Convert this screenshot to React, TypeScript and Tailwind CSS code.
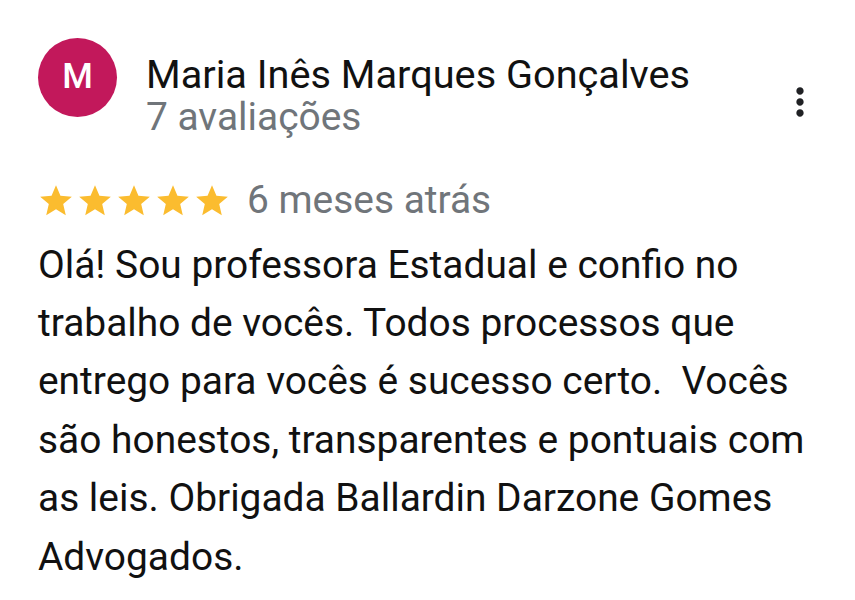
const Star = () => (
  <svg viewBox="0 0 24 24" className="w-[38px] h-[38px]" fill="#fbbc2f">
    <path d="M12 17.27L18.18 21l-1.64-7.03L22 9.24l-7.19-.61L12 2 9.19 8.63 2 9.24l5.46 4.73L5.82 21z" />
  </svg>
);

export default function App() {
  return (
    <div className="w-[855px] h-[600px] bg-white font-['Roboto',sans-serif] pl-[38px] pr-[20px] pt-[38px]">
      {/* Header */}
      <div className="flex items-start">
        <div className="w-[79px] h-[79px] rounded-full bg-[#c2185b] flex items-center justify-center text-white text-[35px] font-medium shrink-0">
          M
        </div>
        <div className="ml-[29px] flex-1 pt-[15.5px]">
          <div className="text-[39.7px] leading-[42px] text-[#111111]">Maria Inês Marques Gonçalves</div>
          <div className="text-[38.9px] leading-[42px] text-[#70757a]">7 avaliações</div>
        </div>
        <svg viewBox="0 0 24 24" className="w-[44px] h-[44px] mt-[41.5px] mr-[13px]" fill="#202124">
          <path d="M12 8c1.1 0 2-.9 2-2s-.9-2-2-2-2 .9-2 2 .9 2 2 2zm0 2c-1.1 0-2 .9-2 2s.9 2 2 2 2-.9 2-2-.9-2-2-2zm0 6c-1.1 0-2 .9-2 2s.9 2 2 2 2-.9 2-2-.9-2-2-2z" />
        </svg>
      </div>

      {/* Rating */}
      <div className="flex items-start h-[42px] mt-[41px]">
        <div className="flex gap-[1px] ml-[-1px] pt-[3px]">
          <Star />
          <Star />
          <Star />
          <Star />
          <Star />
        </div>
        <span className="ml-[16px] text-[38.9px] leading-[42px] text-[#70757a]">6 meses atrás</span>
      </div>

      {/* Body */}
      <p className="text-[38.9px] leading-[58.4px] text-[#111111] mt-[15px]">
        Olá! Sou professora Estadual e confio no trabalho de vocês. Todos processos que entrego para vocês é sucesso certo.&nbsp; Vocês são honestos, transparentes e pontuais com as leis. Obrigada Ballardin Darzone Gomes Advogados.
      </p>
    </div>
  );
}
